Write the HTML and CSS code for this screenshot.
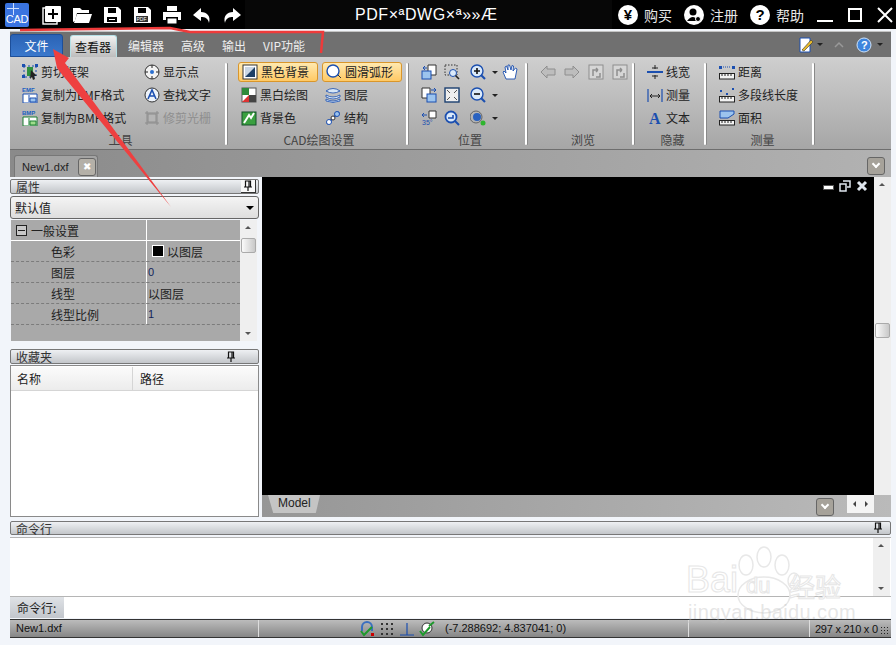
FILE: index.html
```html
<!DOCTYPE html>
<html lang="en">
<head>
  <meta charset="UTF-8">
  <title>PDF DWG</title>
  <link rel="stylesheet" href="styles.css">
</head>
<body>
  <svg class="defs" width="0" height="0">
    <symbol id="i-crop" viewBox="0 0 16 16"><path d="M2 2h12v11H2z" fill="none" stroke="#1b4fb0" stroke-dasharray="2 2"/><path d="M0 0h3v3H0zM13 0h3v3h-3zM0 11h3v3H0z" fill="#1b4fb0"/><rect x="5" y="3" width="6" height="9" fill="#2f8f3f"/><path d="M9 6l6 6-3 0 1 3-2 1-1-3-2 2z" fill="#222"/></symbol>
    <symbol id="i-point" viewBox="0 0 16 16"><circle cx="8" cy="8" r="7" fill="#f2f2f2" stroke="#333"/><circle cx="8" cy="8" r="2" fill="#2a6fd0"/><path d="M8 1v3M8 12v3M1 8h3M12 8h3" stroke="#222"/></symbol>
    <symbol id="i-find" viewBox="0 0 16 16"><circle cx="8" cy="8" r="7" fill="#eef3fa" stroke="#333"/><path d="M4 12L8 3l4 9M6 9h4" fill="none" stroke="#1b4fb0" stroke-width="1.600"/></symbol>
    <symbol id="i-trim" viewBox="0 0 16 16"><path d="M1 3h14M1 13h14M3 1v14M13 1v14" stroke="#8c8c8c"/><rect x="4" y="4" width="8" height="8" fill="#b5b5b5" stroke="#8c8c8c"/></symbol>
    <symbol id="i-black" viewBox="0 0 16 16"><rect x="1" y="1" width="14" height="14" fill="#fff" stroke="#333"/><path d="M3 13V3h10z" fill="#c9d6e4"/><path d="M13 3v10H3z" fill="#1d3f66"/></symbol>
    <symbol id="i-arc" viewBox="0 0 16 16"><circle cx="7" cy="7" r="6" fill="#fff" stroke="#1b4fb0" stroke-width="1.400"/><path d="M12 11l3 3" stroke="#333"/></symbol>
    <symbol id="i-bw" viewBox="0 0 16 16"><rect x="1" y="1" width="14" height="14" fill="#fff" stroke="#555"/><path d="M1 1h7v7H1z" fill="#2e8a3a"/><path d="M8 8h7v7H8z" fill="#444"/><path d="M1 15l7-7v7z" fill="#d33"/></symbol>
    <symbol id="i-layer" viewBox="0 0 16 16"><path d="M1 4q7-5 14 0-7 4-14 0zM1 8q7 4 14 0v2q-7 4-14 0zM1 12q7 4 14 0v2q-7 3-14 0z" fill="#d6e6f7" stroke="#1b4fb0" stroke-width=".8"/></symbol>
    <symbol id="i-bg" viewBox="0 0 16 16"><rect x="1" y="2" width="14" height="13" fill="#3aa040" stroke="#14502a"/><path d="M3 13l5-8 2 3 3-5" fill="none" stroke="#fff" stroke-width="2"/></symbol>
    <symbol id="i-struct" viewBox="0 0 16 16"><path d="M2 14L14 2" stroke="#1b4fb0" stroke-width="2"/><circle cx="4" cy="12" r="2.500" fill="#fff" stroke="#1b4fb0"/><circle cx="12" cy="4" r="2.500" fill="#9cc4ee" stroke="#1b4fb0"/><circle cx="8" cy="8" r="2" fill="#fff" stroke="#333"/></symbol>
    <symbol id="i-page1" viewBox="0 0 16 16"><path d="M7 1h8v10H7z" fill="#fff" stroke="#333"/><rect x="1" y="7" width="9" height="8" fill="#9cc4ee" stroke="#1b4fb0"/><path d="M2 4h4M2 4l2-2M2 4l2 2" stroke="#1b4fb0"/></symbol>
    <symbol id="i-zoomw" viewBox="0 0 16 16"><path d="M1 1h12v10H1z" fill="none" stroke="#333" stroke-dasharray="1.500 1.500"/><circle cx="9" cy="9" r="3.500" fill="#dbeafa" stroke="#1b4fb0"/><path d="M11.500 11.500L15 15" stroke="#222" stroke-width="1.600"/></symbol>
    <symbol id="i-plus" viewBox="0 0 16 16"><circle cx="7" cy="7" r="6" fill="#dbeafa" stroke="#1b4fb0" stroke-width="1.400"/><path d="M4 7h6M7 4v6" stroke="#111" stroke-width="1.600"/><path d="M11 11l4 4" stroke="#1b4fb0" stroke-width="2.200"/></symbol>
    <symbol id="i-minus" viewBox="0 0 16 16"><circle cx="7" cy="7" r="6" fill="#dbeafa" stroke="#1b4fb0" stroke-width="1.400"/><path d="M4 7h6" stroke="#111" stroke-width="1.600"/><path d="M11 11l4 4" stroke="#1b4fb0" stroke-width="2.200"/></symbol>
    <symbol id="i-hand" viewBox="0 0 16 16"><path d="M4 15L1 8l1-1 2 2-1-6 1.500-1L6 6V1h1.500L9 6l1-4.500 1.500.5L11 7l2.500-3L15 5l-2 10z" fill="#fff" stroke="#1b4fb0" stroke-width=".9"/></symbol>
    <symbol id="i-page2" viewBox="0 0 16 16"><path d="M1 1h8v10H1z" fill="#fff" stroke="#333"/><rect x="6" y="7" width="9" height="8" fill="#9cc4ee" stroke="#1b4fb0"/><path d="M10 3h5M15 3l-2-2M15 3l-2 2" stroke="#1b4fb0"/></symbol>
    <symbol id="i-fit" viewBox="0 0 16 16"><rect x="1" y="1" width="14" height="14" fill="#eee" stroke="#1b3f70" stroke-width="1.400"/><path d="M3 3l3 3M13 3l-3 3M3 13l3-3M13 13l-3-3" stroke="#555"/></symbol>
    <symbol id="i-prev" viewBox="0 0 16 16"><circle cx="7" cy="7" r="5.500" fill="#dbeafa" stroke="#1b4fb0" stroke-width="1.800"/><path d="M4 8h5V5" fill="none" stroke="#1b4fb0" stroke-width="1.600"/><path d="M11 11l4 4" stroke="#1b4fb0" stroke-width="2"/></symbol>
    <symbol id="i-globe" viewBox="0 0 16 16"><circle cx="6" cy="7" r="6" fill="none" stroke="#666"/><circle cx="7" cy="7" r="4" fill="#2a62c0"/><circle cx="13" cy="13" r="2.500" fill="#2fb52f"/></symbol>
    <symbol id="i-left" viewBox="0 0 16 16"><path d="M1 8l6-6v3h8v6H7v3z" fill="#bdbdbd" stroke="#8e8e8e"/></symbol>
    <symbol id="i-right" viewBox="0 0 16 16"><path d="M15 8L9 2v3H1v6h8v3z" fill="#bdbdbd" stroke="#8e8e8e"/></symbol>
    <symbol id="i-back" viewBox="0 0 16 16"><rect x="1" y="1" width="14" height="14" fill="#d6d6d6" stroke="#8e8e8e"/><path d="M5 12V6h5M10 6l-2-2M10 6l-2 2M12 9v4H8" fill="none" stroke="#8e8e8e" stroke-width="1.500"/></symbol>
    <symbol id="i-width" viewBox="0 0 16 16"><path d="M0 8h16" stroke="#1b4fb0" stroke-width="2"/><path d="M8 1v4M8 11v4M5 4h6M5 12h6" stroke="#222"/></symbol>
    <symbol id="i-meas" viewBox="0 0 16 16"><path d="M1 2v13M15 2v13" stroke="#1b4fb0" stroke-width="1.200"/><path d="M3 9h10M3 9l2-2M3 9l2 2M13 9l-2-2M13 9l-2 2" stroke="#222"/></symbol>
    <symbol id="i-dist" viewBox="0 0 16 16"><path d="M0 2h3v3H0zM13 2h3v3h-3z" fill="#1b4fb0"/><path d="M4 3h8" stroke="#1b4fb0" stroke-dasharray="1 1"/><rect x=".5" y="9.500" width="15" height="5.500" fill="#f3f3f3" stroke="#222"/><path d="M3 10v2M6 10v2M9 10v2M12 10v2" stroke="#222"/></symbol>
    <symbol id="i-poly" viewBox="0 0 16 16"><path d="M1 3h2v2H1zM7 6h2v2H7zM13 1h2v2h-2z" fill="#1b4fb0"/><rect x=".5" y="9.500" width="15" height="5.500" fill="#f3f3f3" stroke="#222"/><path d="M3 10v2M6 10v2M9 10v2M12 10v2" stroke="#222"/></symbol>
    <symbol id="i-area" viewBox="0 0 16 16"><path d="M1 1h14v3l-6 4H1z" fill="#9cc4ee" stroke="#1b4fb0"/><rect x=".5" y="10.500" width="15" height="4.500" fill="#f3f3f3" stroke="#222"/><path d="M3 11v2M6 11v2M9 11v2M12 11v2" stroke="#222"/></symbol>
    <symbol id="i-pin" viewBox="0 0 10 12"><path d="M2.500 1h5v6h-5zM1 7h8M5 7v4M6 1v6" fill="none" stroke="#111" stroke-width="1.200"/></symbol>
  </svg>

  <!-- title bar -->
  <div class="titlebar">
    <div class="tb-left">
      <div class="app-logo">CAD</div>
      <svg class="tb-ico" viewBox="0 0 20 20"><rect x="1" y="3" width="14" height="16" fill="#000" stroke="#fff" stroke-width="1.400"/><rect x="3" y="1" width="16" height="16" rx="1" fill="#fff"/><path d="M11 4v10M6 9h10" stroke="#000" stroke-width="2"/></svg>
      <svg class="tb-ico" viewBox="0 0 20 20"><path d="M1 3h7l2 2h7v3H5L3 16 1 17z" fill="#fff"/><path d="M5 9h15l-3 9H2z" fill="#fff"/></svg>
      <svg class="tb-ico" viewBox="0 0 20 20"><path d="M2 2h14l3 3v13H2z" fill="#fff"/><path d="M6 3h8v5H6zM5 12h10v5H5z" fill="#000"/><path d="M7 14h6v1H7z" fill="#fff"/></svg>
      <svg class="tb-ico" viewBox="0 0 20 20"><path d="M2 2h14l3 3v13H2z" fill="#fff"/><path d="M6 3h8v5H6z" fill="#000"/><rect x="4" y="11" width="12" height="6" fill="#333"/><text x="4.500" y="16" font-size="5" fill="#fff" font-family="Liberation Sans">PDF</text></svg>
      <svg class="tb-ico" viewBox="0 0 20 20"><path d="M5 1h10v5H5zM1 7h18v8h-3v-3H4v3H1z" fill="#fff"/><path d="M5 13h10v6H5z" fill="#fff" stroke="#000"/></svg>
      <svg class="tb-ico" viewBox="0 0 20 20"><path d="M9 3L1 10l8 6v-4c4 0 7 1 8 6 2-7-2-11-8-11z" fill="#fff"/></svg>
      <svg class="tb-ico" viewBox="0 0 20 20"><path d="M11 3l8 7-8 6v-4c-4 0-7 1-8 6-2-7 2-11 8-11z" fill="#fff"/></svg>
    </div>
    <div class="tb-title">PDF×ªDWG×ª»»Æ</div>
    <div class="tb-right">
      <span class="tb-round">¥</span><span class="tb-link">购买</span>
      <span class="tb-round">
        <svg viewBox="0 0 20 20" width="20" height="20"><circle cx="9" cy="7" r="3.500" fill="#000"/><path d="M3 16q6-8 11 0z" fill="#000"/><circle cx="14" cy="14" r="2.500" fill="#000" stroke="#fff"/></svg>
      </span><span class="tb-link">注册</span>
      <span class="tb-round">?</span><span class="tb-link">帮助</span>
      <svg class="win-btn" viewBox="0 0 16 16"><path d="M0 13h16v2H0z" fill="#fff"/></svg>
      <svg class="win-btn max" viewBox="0 0 16 16"><rect x="2" y="2" width="12" height="12" fill="none" stroke="#fff" stroke-width="2"/></svg>
      <svg class="win-btn close" viewBox="0 0 16 16"><path d="M1 1l14 14M15 1L1 15" stroke="#fff" stroke-width="2"/></svg>
    </div>
  </div>

  <div class="window">
    <!-- ribbon tabs -->
    <div class="rb-tabs">
      <div class="rb-file">文件</div>
      <div class="rb-tab active">查看器</div>
      <div class="rb-tab t2">编辑器</div>
      <div class="rb-tab t3">高级</div>
      <div class="rb-tab t4">输出</div>
      <div class="rb-tab t5">VIP功能</div>
      <div class="rb-tools">
        <svg class="ico" viewBox="0 0 16 16"><path d="M2 1h10v14H2z" fill="#fff" stroke="#1b4fb0"/><path d="M4 13l9-10 2 2-9 9z" fill="#e7b92a" stroke="#333" stroke-width=".6"/></svg>
        <i class="caret"></i>
        <svg class="chev-up" viewBox="0 0 10 8"><path d="M1 6l4-4 4 4" fill="none" stroke="#999" stroke-width="1.500"/></svg>
        <svg class="ico help" viewBox="0 0 16 16"><circle cx="8" cy="8" r="7" fill="#3e85dd" stroke="#cfe3fa"/><text x="5" y="12" font-size="11" font-weight="700" fill="#fff" font-family="Liberation Sans">?</text></svg>
        <i class="caret"></i>
      </div>
    </div>

    <!-- ribbon -->
    <div class="ribbon">
      <div class="rb-group g1">
        <div class="rb-body">
          <div class="rb-col c1">
            <div class="rb-item"><svg class="ico"><use href="#i-crop"/></svg>剪切框架</div>
            <div class="rb-item"><svg class="ico" viewBox="0 0 16 16"><text x="0" y="5" font-size="6" font-weight="700" fill="#1b5fc0" font-family="Liberation Sans">EMF</text><path d="M1 7h14v9H1z" fill="#fff" stroke="#1b4fb0"/><path d="M7 8v7M8 11h6v4H8z" fill="#9cc4ee" stroke="#1b4fb0"/></svg>复制为EMF格式</div>
            <div class="rb-item"><svg class="ico" viewBox="0 0 16 16"><text x="0" y="5" font-size="6" font-weight="700" fill="#1b5fc0" font-family="Liberation Sans">BMP</text><path d="M1 7h14v9H1z" fill="#fff" stroke="#1b7f30"/><path d="M7 8v7M8 11h6v4H8z" fill="#9fdc8c" stroke="#1b7f30"/></svg>复制为BMP格式</div>
          </div>
          <div class="rb-col">
            <div class="rb-item"><svg class="ico"><use href="#i-point"/></svg>显示点</div>
            <div class="rb-item"><svg class="ico"><use href="#i-find"/></svg>查找文字</div>
            <div class="rb-item off"><svg class="ico"><use href="#i-trim"/></svg>修剪光栅</div>
          </div>
        </div>
        <div class="rb-label">工具</div>
      </div>
      <div class="rb-sep"></div>

      <div class="rb-group g2">
        <div class="rb-body">
          <div class="rb-col">
            <div class="rb-item on"><svg class="ico"><use href="#i-black"/></svg>黑色背景</div>
            <div class="rb-item plain"><svg class="ico"><use href="#i-bw"/></svg>黑白绘图</div>
            <div class="rb-item plain"><svg class="ico"><use href="#i-bg"/></svg>背景色</div>
          </div>
          <div class="rb-col">
            <div class="rb-item on"><svg class="ico"><use href="#i-arc"/></svg>圆滑弧形</div>
            <div class="rb-item plain"><svg class="ico"><use href="#i-layer"/></svg>图层</div>
            <div class="rb-item plain"><svg class="ico"><use href="#i-struct"/></svg>结构</div>
          </div>
        </div>
        <div class="rb-label">CAD绘图设置</div>
      </div>
      <div class="rb-sep"></div>

      <div class="rb-group g3">
        <div class="rb-body">
          <div class="rb-col">
            <div class="rb-item"><svg class="ico"><use href="#i-page1"/></svg></div>
            <div class="rb-item"><svg class="ico"><use href="#i-page2"/></svg></div>
            <div class="rb-item"><svg class="ico" viewBox="0 0 16 16"><path d="M8 1h7v7H8z" fill="#fff" stroke="#333"/><path d="M1 5h5M1 5l2-2M1 5l2 2" stroke="#1b4fb0"/><text x="1" y="15" font-size="7" fill="#1b4fb0" font-family="Liberation Sans">35°</text></svg></div>
          </div>
          <div class="rb-col">
            <div class="rb-item"><svg class="ico"><use href="#i-zoomw"/></svg></div>
            <div class="rb-item"><svg class="ico"><use href="#i-fit"/></svg></div>
            <div class="rb-item"><svg class="ico"><use href="#i-prev"/></svg></div>
          </div>
          <div class="rb-col">
            <div class="rb-item"><svg class="ico"><use href="#i-plus"/></svg><i class="caret"></i></div>
            <div class="rb-item"><svg class="ico"><use href="#i-minus"/></svg><i class="caret"></i></div>
            <div class="rb-item"><svg class="ico"><use href="#i-globe"/></svg><i class="caret"></i></div>
          </div>
          <div class="rb-col">
            <div class="rb-item"><svg class="ico"><use href="#i-hand"/></svg></div>
          </div>
        </div>
        <div class="rb-label">位置</div>
      </div>
      <div class="rb-sep"></div>

      <div class="rb-group g4">
        <div class="rb-body">
          <div class="rb-item"><svg class="ico"><use href="#i-left"/></svg></div>
          <div class="rb-item"><svg class="ico"><use href="#i-right"/></svg></div>
          <div class="rb-item"><svg class="ico"><use href="#i-back"/></svg></div>
          <div class="rb-item"><svg class="ico"><use href="#i-back"/></svg></div>
        </div>
        <div class="rb-label">浏览</div>
      </div>
      <div class="rb-sep"></div>

      <div class="rb-group g5">
        <div class="rb-body">
          <div class="rb-col">
            <div class="rb-item"><svg class="ico"><use href="#i-width"/></svg>线宽</div>
            <div class="rb-item"><svg class="ico"><use href="#i-meas"/></svg>测量</div>
            <div class="rb-item"><svg class="ico ico-a" viewBox="0 0 16 16"><text x="2" y="14" font-size="16" font-weight="700" fill="#1b4fb0" font-family="Liberation Serif">A</text></svg>文本</div>
          </div>
        </div>
        <div class="rb-label">隐藏</div>
      </div>
      <div class="rb-sep"></div>

      <div class="rb-group g6">
        <div class="rb-body">
          <div class="rb-col">
            <div class="rb-item"><svg class="ico"><use href="#i-dist"/></svg>距离</div>
            <div class="rb-item"><svg class="ico"><use href="#i-poly"/></svg>多段线长度</div>
            <div class="rb-item"><svg class="ico"><use href="#i-area"/></svg>面积</div>
          </div>
        </div>
        <div class="rb-label">测量</div>
      </div>
      <div class="rb-sep"></div>
    </div>

    <!-- document tabs -->
    <div class="doc-strip">
      <div class="doc-tab">New1.dxf<span class="doc-close">✖</span></div>
      <div class="chev-btn"></div>
    </div>

    <div class="workspace">
      <!-- left panels -->
      <div class="side">
        <div class="panel-head">属性<span class="pin boxed"><svg width="10" height="12"><use href="#i-pin"/></svg></span></div>
        <div class="combo">默认值<i class="caret dark"></i></div>
        <div class="props">
          <div class="prop-grid">
            <div class="prop-row group"><div class="pk"><span class="minus"></span>一般设置</div><div class="pv"></div></div>
            <div class="prop-row"><div class="pk">色彩</div><div class="pv"><span class="swatch"></span>以图层</div></div>
            <div class="prop-row"><div class="pk">图层</div><div class="pv num">0</div></div>
            <div class="prop-row"><div class="pk">线型</div><div class="pv">以图层</div></div>
            <div class="prop-row"><div class="pk">线型比例</div><div class="pv num">1</div></div>
          </div>
          <div class="vscroll">
            <i class="arrow-up"></i>
            <span class="thumb small"></span>
            <i class="arrow-down"></i>
          </div>
        </div>
        <div class="panel-head fav">收藏夹<span class="pin"><svg width="10" height="12"><use href="#i-pin"/></svg></span></div>
        <div class="fav-list">
          <div class="fav-cols"><div class="fc1">名称</div><div class="fc2">路径</div></div>
        </div>
      </div>

      <!-- drawing area -->
      <div class="canvas-wrap">
        <div class="canvas-row">
          <div class="canvas">
            <div class="mdi-btns">
              <span class="mdi-min"></span>
              <svg width="12" height="12" viewBox="0 0 12 12"><path d="M4 1h7v6H8M1 4h6v7H1z" fill="none" stroke="#dfe6ee" stroke-width="1.500"/></svg>
              <svg width="12" height="12" viewBox="0 0 12 12"><path d="M2 2l8 8M10 2l-8 8" stroke="#dfe6ee" stroke-width="3"/></svg>
            </div>
          </div>
          <div class="vscroll big">
            <i class="arrow-up"></i>
            <span class="thumb"></span>
          </div>
        </div>
        <div class="model-strip">
          <div class="model-tab">Model</div>
          <div class="chev-btn"></div>
          <div class="hscroll"><i class="arrow-l"></i><i class="arrow-r"></i></div>
        </div>
      </div>
    </div>

    <!-- command line -->
    <div class="panel-head cmd">命令行<span class="pin"><svg width="10" height="12"><use href="#i-pin"/></svg></span></div>
    <div class="cmd-out">
      <div class="vscroll cmd-scroll"><i class="arrow-up"></i><i class="arrow-down"></i></div>
    </div>
    <div class="cmd-in"><div class="cmd-label">命令行:</div><div class="cmd-input"></div></div>

    <!-- status bar -->
    <div class="status">
      <div class="st-file">New1.dxf</div>
      <div class="st-blank"></div>
      <div class="st-icons">
        <svg class="ico" viewBox="0 0 16 16"><path d="M3 10V6a5 5 0 0 1 10 0v4" fill="none" stroke="#3b6fc0" stroke-width="2"/><path d="M2 10l3 4 8-8" fill="none" stroke="#1d9a2c" stroke-width="2"/><rect x="12" y="12" width="3" height="3" fill="#c00"/></svg>
        <svg class="ico" viewBox="0 0 16 16"><path d="M2 2h2v2H2zM7 2h2v2H7zM12 2h2v2h-2zM2 7h2v2H2zM7 7h2v2H7zM12 7h2v2h-2zM2 12h2v2H2zM7 12h2v2H7zM12 12h2v2h-2z" fill="#333"/></svg>
        <svg class="ico" viewBox="0 0 16 16"><path d="M8 2v12M1 14h14" stroke="#1b4fb0" stroke-width="1.200"/></svg>
        <svg class="ico" viewBox="0 0 16 16"><circle cx="8" cy="7" r="5" fill="#fff" stroke="#333"/><path d="M1 10l3 4 7-8M10 5l5-4" fill="none" stroke="#1d9a2c" stroke-width="2"/></svg>
      </div>
      <div class="st-coords">(-7.288692; 4.837041; 0)</div>
      <div class="st-blank2"></div>
      <div class="st-size">297 x 210 x 0</div>
      <div class="st-grip"></div>
    </div>
  </div>

  <!-- marks drawn on top of the screenshot -->
  <svg class="marks" width="896" height="645" viewBox="0 0 896 645">
    <path d="M20 30L170 28 190 32 323 32 321 53" fill="none" stroke="#ee3a3a" stroke-width="2.500"/>
    <path d="M53 49L69 58 65 63 171 207 60 72 57 68z" fill="#ee4040"/>
  </svg>
  <div class="watermark">
    <svg class="wm-paw" width="100" height="70" viewBox="0 0 100 70"><g fill="none" stroke="#e8e8e8" stroke-width="1.500"><ellipse cx="30" cy="20" rx="7" ry="10"/><ellipse cx="48" cy="12" rx="7" ry="10"/><ellipse cx="66" cy="20" rx="7" ry="10"/><ellipse cx="78" cy="36" rx="6" ry="8"/><ellipse cx="48" cy="50" rx="26" ry="18"/></g></svg>
    <span class="wm-bai">Bai</span><span class="wm-du">du</span><span class="wm-jy">经验</span>
    <div class="wm-url">jingyan.baidu.com</div>
  </div>
</body>
</html>
```

FILE: styles.css
```css
html, body {
  margin: 0;
  padding: 0;
}
body {
  width: 896px;
  height: 645px;
  overflow: hidden;
  position: relative;
  background-color: #f2f5fa;
  font-family: "Noto Sans CJK SC", "Liberation Sans", sans-serif;
  font-size: 12px;
  color: #222;
}
.defs {
  position: absolute;
}
.ico {
  width: 16px;
  height: 16px;
  flex: none;
}
.ico-a {
  overflow: visible;
}

/* title bar */
.titlebar {
  display: flex;
  height: 29px;
  background-color: #070707;
  color: #fff;
}
.tb-left {
  display: flex;
  align-items: center;
  flex: none;
  width: 245px;
  padding-left: 5px;
  gap: 10px;
  box-sizing: border-box;
  background-color: #000;
}
.app-logo {
  width: 24px;
  height: 24px;
  margin-right: 3px;
  padding-top: 10px;
  background:
    linear-gradient(#cfe0ff, #cfe0ff) 8px 0 / 1px 12px no-repeat,
    linear-gradient(#cfe0ff, #cfe0ff) 2px 5px / 12px 1px no-repeat,
    #3a74e0;
  border-radius: 2px;
  box-sizing: border-box;
  font: 11px/13px "Liberation Sans", sans-serif;
  letter-spacing: -0.3px;
  text-align: center;
  color: #fff;
}
.tb-ico {
  width: 20px;
  height: 20px;
}
.tb-title {
  flex: none;
  width: 367px;
  padding-left: 110px;
  box-sizing: border-box;
  font: 16px/29px "Liberation Sans", sans-serif;
  letter-spacing: 0.55px;
  white-space: nowrap;
}
.tb-right {
  flex: 1;
  display: flex;
  align-items: center;
  padding-left: 6px;
  background-color: #000;
}
.tb-round {
  width: 20px;
  height: 20px;
  border-radius: 50%;
  background-color: #fff;
  color: #000;
  font: 700 15px/20px "Liberation Sans", sans-serif;
  text-align: center;
  flex: none;
}
.tb-link {
  width: 46px;
  padding-left: 6px;
  box-sizing: border-box;
  font-size: 14px;
  color: #e8e8e8;
}
.win-btn {
  width: 16px;
  height: 16px;
  margin-left: 1px;
  flex: none;
}
.win-btn.max {
  margin-left: 14px;
}
.win-btn.close {
  margin-left: 14px;
}

/* window frame */
.window {
  padding: 2px 5px 0 10px;
}

/* ribbon tabs */
.rb-tabs {
  display: flex;
  align-items: flex-end;
  height: 26px;
  background-color: #707070;
  border-top: 1px solid #c4c4c4;
  box-sizing: border-box;
  position: relative;
}
.rb-file {
  width: 53px;
  height: 23px;
  line-height: 22px;
  text-align: center;
  color: #fff;
  border: 1px solid #1d4f9a;
  border-radius: 3px 3px 0 0;
  box-sizing: border-box;
  background: linear-gradient(#2b63b5, #3a78cc);
}
.rb-tab {
  height: 22px;
  line-height: 22px;
  color: #eee;
}
.rb-tab.active {
  width: 47px;
  margin-left: 7px;
  padding-left: 4px;
  color: #111;
  border: 1px solid #b5e0e6;
  border-bottom: none;
  border-radius: 3px 3px 0 0;
  box-sizing: border-box;
  background: linear-gradient(#f2f2f2, #bdbdbd);
}
.rb-tab.t2 {
  margin-left: 11px;
}
.rb-tab.t3 {
  margin-left: 17px;
}
.rb-tab.t4 {
  margin-left: 17px;
}
.rb-tab.t5 {
  margin-left: 17px;
}
.rb-tools {
  margin-left: auto;
  margin-right: 8px;
  align-self: center;
  display: flex;
  align-items: center;
}
.rb-tools .help {
  margin-left: 12px;
}
.chev-up {
  width: 10px;
  height: 8px;
  margin-left: 11px;
}
.caret {
  display: inline-block;
  width: 0;
  height: 0;
  margin-left: 3px;
  border-left: 3px solid transparent;
  border-right: 3px solid transparent;
  border-top: 3px solid #222;
}
.help + .caret {
  margin-left: 5px;
}

/* ribbon */
.ribbon {
  display: flex;
  height: 93px;
  padding-bottom: 1px;
  background: linear-gradient(#cfcfcf, #a6a6a6);
  border-bottom: 1px solid #6e6e6e;
  box-sizing: border-box;
  position: relative;
}
.rb-group {
  display: flex;
  flex-direction: column;
  box-sizing: border-box;
  padding-top: 5px;
}
.rb-body {
  display: flex;
  height: 70px;
}
.rb-col {
  display: flex;
  flex-direction: column;
  gap: 3px;
}
.rb-item {
  display: flex;
  align-items: center;
  gap: 3px;
  height: 20px;
  line-height: 20px;
  white-space: nowrap;
}
.rb-item.off {
  color: #8f8f8f;
}
.rb-label {
  padding-right: 6px;
  text-align: center;
  line-height: 16px;
  color: #444;
}
.rb-sep {
  flex: none;
  width: 2px;
  height: 82px;
  margin-top: 6px;
  background-color: #fff;
  border-radius: 1px;
  box-shadow: 1px 0 0 #8a8a8a;
}
.g1 {
  width: 215px;
  padding-left: 12px;
}
.g1 .rb-col.c1 {
  width: 122px;
}
.g2 {
  width: 179px;
  padding-left: 11px;
}
.g2 .rb-col {
  width: 81px;
  margin-right: 4px;
}
.rb-item.on {
  padding-left: 3px;
  border: 1px solid #d9962b;
  border-radius: 3px;
  box-sizing: border-box;
  background: linear-gradient(#ffe9b0, #ffc964);
}
.rb-item.plain {
  padding-left: 3px;
}
.g3 {
  width: 117px;
  padding-left: 13px;
}
.g3 .rb-col {
  width: 24px;
}
.g3 .rb-col:nth-child(2) {
  width: 27px;
}
.g3 .rb-col:nth-child(3) {
  width: 33px;
}
.g4 {
  width: 105px;
  padding-left: 13px;
}
.g4 .rb-body {
  gap: 8px;
  height: 70px;
}
.g5 {
  width: 70px;
  padding-left: 13px;
}
.g6 {
  width: 106px;
  padding-left: 13px;
}

/* document strip */
.doc-strip {
  display: flex;
  align-items: flex-end;
  justify-content: space-between;
  height: 27px;
  padding: 0 6px 0 4px;
  background: linear-gradient(90deg, #8a8a8a, #b2b2b2);
}
.doc-tab {
  display: flex;
  align-items: center;
  width: 84px;
  height: 22px;
  padding-left: 7px;
  box-sizing: border-box;
  font-family: "Liberation Sans", sans-serif;
  font-size: 11px;
  letter-spacing: 0.1px;
  border: 1px solid #777;
  border-bottom: none;
  border-radius: 3px 3px 0 0;
  background-color: #a3a3a3;
}
.doc-close {
  width: 18px;
  height: 18px;
  margin-left: 9px;
  line-height: 16px;
  font-size: 10px;
  text-align: center;
  color: #fff;
  background-color: #b4b0a8;
  border: 1px solid #666;
  border-radius: 3px;
  box-sizing: border-box;
}
.chev-btn {
  width: 18px;
  height: 18px;
  margin-bottom: 2px;
  background-color: #a6a29a;
  border: 1px solid #666;
  border-radius: 3px;
  box-sizing: border-box;
  position: relative;
}
.chev-btn::after {
  content: "";
  position: absolute;
  left: 5px;
  top: 3px;
  width: 4px;
  height: 4px;
  border-right: 2px solid #fff;
  border-bottom: 2px solid #fff;
  transform: rotate(45deg);
}

/* workspace */
.workspace {
  display: flex;
  height: 340px;
}
.side {
  width: 249px;
  margin-right: 3px;
  padding-top: 2px;
  box-sizing: border-box;
  display: flex;
  flex-direction: column;
}
.panel-head {
  display: flex;
  justify-content: space-between;
  align-items: center;
  flex: none;
  height: 15px;
  padding: 0 7px 0 5px;
  line-height: 15px;
  color: #333;
  border: 1px solid #777;
  border-radius: 2px;
  box-sizing: border-box;
  background: linear-gradient(#eef0f3, #c3c6ca);
}
.pin {
  display: flex;
  width: 14px;
  height: 12px;
  justify-content: center;
  margin-right: 13px;
}
.pin.boxed {
  margin-right: -5px;
  background-color: #f8f8f8;
  border-right: 1px solid #333;
  border-bottom: 1px solid #333;
}
.combo {
  display: flex;
  justify-content: space-between;
  align-items: center;
  flex: none;
  height: 23px;
  margin-top: 2px;
  padding: 0 4px;
  font-size: 12px;
  color: #222;
  border: 1px solid #666;
  border-radius: 3px;
  box-sizing: border-box;
  background: linear-gradient(#f4f4f4, #dedede);
}
.caret.dark {
  border-left-width: 4px;
  border-right-width: 4px;
  border-top-width: 4px;
  border-top-color: #000;
}
.props {
  display: flex;
  flex: none;
  height: 121px;
  margin-top: 1px;
  padding-left: 1px;
}
.prop-grid {
  width: 229px;
  background-color: #a9a9a9;
}
.prop-row {
  display: flex;
  height: 21px;
  line-height: 21px;
  box-sizing: border-box;
  border-bottom: 1px dashed #7c7c7c;
}
.prop-row.group {
  border-bottom: 1px solid #fff;
}
.pk {
  width: 136px;
  padding-left: 40px;
  box-sizing: border-box;
  border-right: 1px solid #fff;
}
.group .pk {
  display: flex;
  align-items: center;
  padding-left: 5px;
}
.minus {
  width: 11px;
  height: 11px;
  margin-right: 4px;
  border: 1px solid #222;
  box-sizing: border-box;
  background: linear-gradient(#222, #222) center / 7px 1px no-repeat #c8c8c8;
}
.pv {
  display: flex;
  align-items: center;
  padding-left: 1px;
  flex: 1;
}
.pv.num {
  padding-left: 1px;
  font-family: "Liberation Sans", sans-serif;
  font-size: 11px;
  color: #13245a;
}
.swatch {
  width: 10px;
  height: 10px;
  margin: 0 3px 0 4px;
  background-color: #000;
  border: 1px solid #fff;
}
.vscroll {
  position: relative;
  width: 17px;
  background-color: #efefef;
  box-sizing: border-box;
  flex: none;
}
.vscroll .thumb {
  position: absolute;
  left: 1px;
  top: 18px;
  width: 15px;
  height: 15px;
  background: linear-gradient(90deg, #fafafa, #c8c8c8);
  border: 1px solid #aaa;
  border-radius: 2px;
  box-sizing: border-box;
}
.arrow-up, .arrow-down {
  position: absolute;
  left: 5px;
  width: 0;
  height: 0;
  border-left: 3px solid transparent;
  border-right: 3px solid transparent;
}
.arrow-up {
  top: 6px;
  border-bottom: 3px solid #555;
}
.arrow-down {
  bottom: 6px;
  border-top: 3px solid #555;
}
.panel-head.fav {
  margin-top: 8px;
}
.fav-list {
  flex: 1;
  margin-top: 1px;
  background-color: #fff;
  border: 1px solid #8a8a8a;
  box-sizing: border-box;
}
.fav-cols {
  display: flex;
  height: 24px;
  margin-top: 1px;
  line-height: 24px;
  background: linear-gradient(#fbfbfb, #ececec);
  border-bottom: 1px solid #d5d5d5;
  box-sizing: border-box;
}
.fc1 {
  width: 122px;
  padding-left: 6px;
  box-sizing: border-box;
  border-right: 1px solid #d5d5d5;
}
.fc2 {
  padding-left: 7px;
}

/* drawing area */
.canvas-wrap {
  flex: 1;
  display: flex;
  flex-direction: column;
}
.canvas-row {
  display: flex;
  height: 318px;
}
.canvas {
  flex: 1;
  background-color: #000;
  position: relative;
}
.mdi-btns {
  position: absolute;
  top: 3px;
  right: 6px;
  display: flex;
  align-items: center;
  gap: 5px;
}
.mdi-min {
  width: 11px;
  height: 5px;
  margin-top: 3px;
  background-color: #fff;
  border: 1px solid #555;
  box-sizing: border-box;
}
.vscroll.big .thumb {
  top: 146px;
}
.model-strip {
  display: flex;
  height: 22px;
  background: linear-gradient(90deg, #969696, #bababa);
  position: relative;
}
.model-tab {
  width: 52px;
  height: 18px;
  margin-left: 6px;
  padding-left: 10px;
  box-sizing: border-box;
  line-height: 16px;
  font-family: "Liberation Sans", sans-serif;
  font-size: 12px;
  background-color: #c4c4c4;
  clip-path: polygon(0 0, 100% 0, 92% 100%, 10% 100%);
}
.model-strip .chev-btn {
  margin: 3px 0 0 496px;
}
.hscroll {
  display: flex;
  justify-content: center;
  gap: 9px;
  padding-top: 6px;
  width: 27px;
  height: 18px;
  margin-left: 13px;
  box-sizing: border-box;
  background-color: #f4f4f4;
}
.arrow-l, .arrow-r {
  width: 0;
  height: 0;
  border-top: 3px solid transparent;
  border-bottom: 3px solid transparent;
}
.arrow-l {
  border-right: 3px solid #444;
}
.arrow-r {
  border-left: 3px solid #444;
}

/* command line */
.panel-head.cmd {
  height: 14px;
  margin-top: 4px;
}
.panel-head.cmd .pin {
  margin-right: -2px;
}
.cmd-out {
  display: flex;
  justify-content: flex-end;
  height: 60px;
  margin-top: 2px;
  background-color: #fff;
  border-top: 1px solid #b5b5b5;
  border-bottom: 1px solid #b5b5b5;
  box-sizing: border-box;
}
.cmd-scroll {
  margin-right: 1px;
}
.cmd-in {
  display: flex;
  height: 21px;
}
.cmd-label {
  width: 54px;
  padding-left: 7px;
  line-height: 21px;
  box-sizing: border-box;
  background: linear-gradient(#dfe2e6, #c2c6cc);
}
.cmd-input {
  flex: 1;
  background-color: #fff;
}

/* status bar */
.status {
  display: flex;
  align-items: center;
  height: 19px;
  margin-top: 1px;
  border-top: 1px solid #333;
  border-bottom: 1px solid #333;
  box-sizing: border-box;
  font-family: "Liberation Sans", sans-serif;
  font-size: 11px;
  color: #111;
  background: linear-gradient(#bcbcbc, #868686);
}
.st-file {
  width: 249px;
  padding-left: 6px;
  box-sizing: border-box;
  border-right: 1px solid #ddd;
  height: 100%;
  line-height: 16px;
}
.st-blank {
  width: 100px;
}
.st-icons {
  display: flex;
  gap: 4px;
}
.st-coords {
  width: 254px;
  padding-left: 10px;
  box-sizing: border-box;
  height: 100%;
  line-height: 16px;
  border-right: 1px solid #ddd;
}
.st-blank2 {
  width: 121px;
  height: 100%;
  border-right: 1px solid #ddd;
  box-sizing: border-box;
}
.st-size {
  padding-left: 5px;
  letter-spacing: -0.25px;
  white-space: nowrap;
}
.st-grip {
  width: 8px;
  height: 10px;
  margin: 5px 0 0 2px;
  background: radial-gradient(circle, #222 1px, transparent 1px) 0 0 / 3px 3px;
}

/* marks */
.marks {
  position: absolute;
  left: 0;
  top: 0;
  pointer-events: none;
}
.watermark {
  position: absolute;
  left: 686px;
  top: 545px;
  width: 170px;
  height: 74px;
  color: #fff;
  font-family: "Liberation Sans", sans-serif;
}
.wm-paw {
  position: absolute;
  left: 30px;
  top: 0;
}
.wm-bai, .wm-du, .wm-jy {
  position: absolute;
  -webkit-text-stroke: 1px #e6e6e6;
  color: #fff;
}
.wm-bai {
  left: 0;
  top: 14px;
  font-size: 36px;
}
.wm-du {
  left: 60px;
  top: 28px;
  font-size: 22px;
}
.wm-jy {
  left: 103px;
  top: 22px;
  font-family: "Noto Sans CJK SC", sans-serif;
  font-size: 26px;
}
.wm-url {
  position: absolute;
  left: 2px;
  top: 60px;
  font-size: 20px;
  line-height: 14px;
  letter-spacing: 0.4px;
  color: rgba(190, 190, 190, 0.4);
  white-space: nowrap;
}
```
